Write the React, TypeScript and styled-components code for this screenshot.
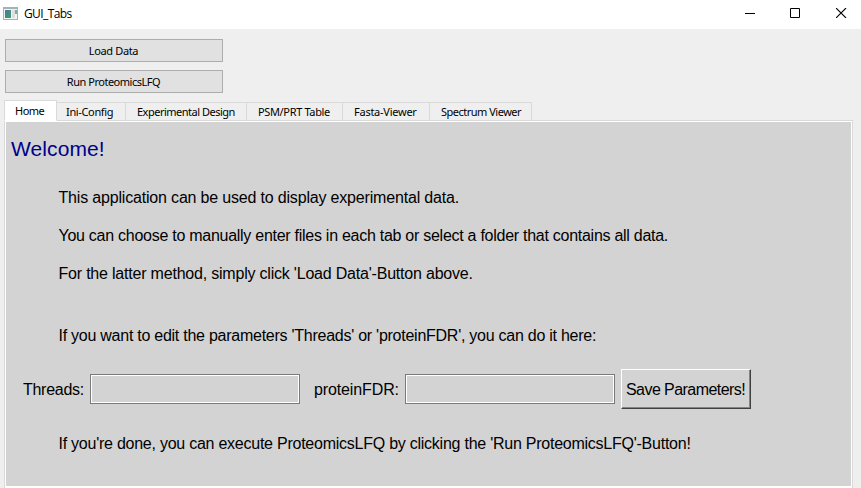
import React from "react";
import styled, { createGlobalStyle } from "styled-components";

const GlobalStyle = createGlobalStyle`
  * { box-sizing: border-box; }
  body { margin: 0; background: #efefef; overflow: hidden; }
`;

const Window = styled.div`
  width: 861px;
  height: 488px;
  display: flex;
  flex-direction: column;
  overflow: hidden;
  background: #efefef;
  color: #000;
  font-family: "Noto Sans", "Open Sans", sans-serif;
  font-size: 11px;
`;

const TitleBar = styled.header`
  height: 29px;
  flex: none;
  display: flex;
  align-items: flex-start;
  padding: 7px 14px 0 3px;
  background: #fff;
`;

const Title = styled.span<{ $spacing: number }>`
  flex: 1;
  margin: -1px 0 0 6px;
  font-family: "Open Sans", sans-serif;
  font-size: 12px;
  line-height: 16px;
  letter-spacing: ${(p) => p.$spacing}px;
`;

const WindowControls = styled.div`
  display: flex;
  gap: 35px;
  padding-top: 1px;
  svg { display: block; }
  svg:last-child { margin-left: 1px; }
`;

const Actions = styled.div`
  display: flex;
  flex-direction: column;
  gap: 8px;
  padding: 10px 0 0 5px;
`;

const ActionButton = styled.button<{ $spacing: number }>`
  width: 218px;
  height: 23px;
  padding: 0 1px 0 0;
  border: 1px solid #adadad;
  background: #e1e1e1;
  color: #000;
  font: inherit;
  line-height: 21px;
  letter-spacing: ${(p) => p.$spacing}px;
`;

const TabBar = styled.nav`
  display: flex;
  align-items: flex-end;
  height: 21px;
  margin: 7px 0 -1px 4px;
  position: relative;
`;

const Tab = styled.div<{ $width: number; $pad: number; $active?: boolean; $spacing: number }>`
  width: ${(p) => p.$width}px;
  height: ${(p) => (p.$active ? 21 : 19)}px;
  padding-left: ${(p) => p.$pad}px;
  border: 1px solid #d9d9d9;
  border-left-width: ${(p) => (p.$active ? 1 : 0)}px;
  border-bottom-color: ${(p) => (p.$active ? "#fff" : "#d9d9d9")};
  background: ${(p) => (p.$active ? "#fff" : "#efefef")};
  line-height: ${(p) => (p.$active ? 20 : 18)}px;
  letter-spacing: ${(p) => p.$spacing}px;
  white-space: nowrap;
`;

const Pane = styled.main`
  width: 849px;
  height: 368px;
  flex: none;
  margin-left: 4px;
  border: 1px solid #d9d9d9;
  border-bottom: 0;
  background: #fff;
  padding: 1px 1px 2px;
`;

const Page = styled.section`
  height: 364px;
  background: #d3d3d3;
  font-family: "Liberation Sans", Arial, sans-serif;
  font-size: 16px;
  line-height: 20px;
  white-space: nowrap;
`;

const Heading = styled.h1<{ $spacing: number }>`
  margin: 0;
  padding: 14px 0 0 5px;
  font-size: 21px;
  font-weight: 400;
  line-height: 26px;
  color: #00008b;
  letter-spacing: ${(p) => p.$spacing}px;
`;

const Paragraph = styled.p<{ $gap: number; $spacing: number }>`
  margin: ${(p) => p.$gap}px 0 0 52.5px;
  letter-spacing: ${(p) => p.$spacing}px;
`;

const Form = styled.form`
  display: flex;
  align-items: center;
  height: 40px;
  margin-top: 23px;
  padding-left: 17px;
`;

const Label = styled.label<{ $width: number; $spacing: number }>`
  width: ${(p) => p.$width}px;
  padding-top: 2px;
  letter-spacing: ${(p) => p.$spacing}px;
`;

const Field = styled.input`
  width: 210px;
  height: 30px;
  margin-right: 14px;
  padding: 2px 4px;
  border: 1px solid #7a7a7a;
  border-radius: 0;
  outline: 1px solid #fff;
  outline-offset: -2px;
  background: #d3d3d3;
  font: inherit;
`;

const SaveButton = styled.button<{ $spacing: number }>`
  width: 130px;
  height: 40px;
  margin-left: -8px;
  padding: 1px 0 0 4px;
  border: 1px solid;
  border-color: #fff #404040 #404040 #fff;
  box-shadow: inset -1px -1px 0 #848484;
  background: #d3d3d3;
  color: #000;
  font: inherit;
  text-align: left;
  letter-spacing: ${(p) => p.$spacing}px;
`;

const tabs = [
  { label: "Home", width: 53, pad: 10, spacing: -0.5 },
  { label: "Ini-Config", width: 69, pad: 9, spacing: -0.35 },
  { label: "Experimental Design", width: 121, pad: 11, spacing: -0.5 },
  { label: "PSM/PRT Table", width: 96, pad: 11, spacing: -0.35 },
  { label: "Fasta-Viewer", width: 87, pad: 11, spacing: -0.25 },
  { label: "Spectrum Viewer", width: 102, pad: 11, spacing: -0.5 },
];

const paragraphs = [
  { text: "This application can be used to display experimental data.", gap: 26, spacing: -0.18 },
  { text: "You can choose to manually enter files in each tab or select a folder that contains all data.", gap: 18, spacing: -0.268 },
  { text: "For the latter method, simply click 'Load Data'-Button above.", gap: 18, spacing: -0.205 },
  { text: "If you want to edit the parameters 'Threads' or 'proteinFDR', you can do it here:", gap: 42, spacing: -0.255 },
];

const AppIcon = () => (
  <svg width="15" height="13" viewBox="0 0 15 13" shapeRendering="crispEdges">
    <defs>
      <linearGradient id="screen" x1="0" y1="0" x2="1" y2="1">
        <stop offset="0" stopColor="#4878a0" />
        <stop offset="1" stopColor="#40a070" />
      </linearGradient>
    </defs>
    <path fill="#a8b0b4" d="M0 0h15v13H0z" />
    <path fill="#f3f3f3" d="M1 2h13v10H1z" />
    <path fill="url(#screen)" d="M2 3h6v8H2z" />
    <path fill="#dedede" d="M9 3h3v8H9z" />
    <path fill="#6fb2a0" d="M12 3h2v4h-2z" />
  </svg>
);

export default function App() {
  return (
    <Window>
      <GlobalStyle />
      <TitleBar>
        <AppIcon />
        <Title $spacing={-0.6}>GUI_Tabs</Title>
        <WindowControls>
          <svg width="10" height="10"><path fill="#000" d="M0 5h10v1H0z" /></svg>
          <svg width="10" height="10"><path fill="none" stroke="#000" d="M.5.5h9v9h-9z" /></svg>
          <svg width="11" height="10"><path fill="none" stroke="#000" strokeWidth="1.1" d="M0 0l10 10M10 0l-10 10" /></svg>
        </WindowControls>
      </TitleBar>
      <Actions>
        <ActionButton $spacing={-0.35}>Load Data</ActionButton>
        <ActionButton $spacing={-0.48}>Run ProteomicsLFQ</ActionButton>
      </Actions>
      <TabBar>
        {tabs.map((t, i) => (
          <Tab key={t.label} $width={t.width} $pad={t.pad} $active={i === 0} $spacing={t.spacing}>
            <span>{t.label}</span>
          </Tab>
        ))}
      </TabBar>
      <Pane>
        <Page>
          <Heading $spacing={0.1}>Welcome!</Heading>
          {paragraphs.map((p) => (
            <Paragraph key={p.text} $gap={p.gap} $spacing={p.spacing}>{p.text}</Paragraph>
          ))}
          <Form>
            <Label htmlFor="threads" $width={67} $spacing={-0.28}>Threads:</Label>
            <Field id="threads" />
            <Label htmlFor="fdr" $width={91} $spacing={-0.12}>proteinFDR:</Label>
            <Field id="fdr" />
            <SaveButton type="button" $spacing={-0.56}>Save Parameters!</SaveButton>
          </Form>
          <Paragraph $gap={25} $spacing={-0.245}>
            If you're done, you can execute ProteomicsLFQ by clicking the 'Run ProteomicsLFQ'-Button!
          </Paragraph>
        </Page>
      </Pane>
    </Window>
  );
}
